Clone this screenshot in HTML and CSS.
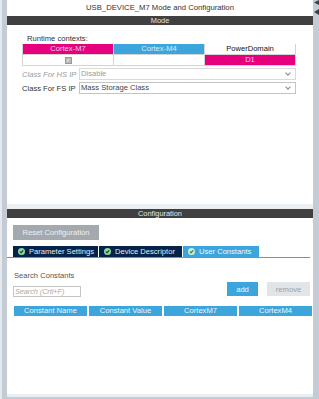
FILE: index.html
```html
<!DOCTYPE html>
<html lang="en">
<head>
    <meta charset="UTF-8">
    <meta name="viewport" content="width=device-width, initial-scale=1.0"/>
    <title>USB_DEVICE_M7 Mode and Configuration</title>
    <link rel="stylesheet" href="styles.css">
</head>
<body>
    <div class="screen">
        <div class="edge-left"></div>
        <div class="main">
            <section class="panel mode-panel">
                <div class="title">USB_DEVICE_M7 Mode and Configuration</div>
                <div class="bar">Mode</div>
                <div class="mode-body">
                    <div class="runtime-label">Runtime contexts:</div>
                    <div class="ctx-table">
                        <div class="cell magenta">Cortex-M7</div>
                        <div class="cell blue">Cortex-M4</div>
                        <div class="cell plain">PowerDomain</div>
                        <div class="cell"><span class="checkbox">&#10003;</span></div>
                        <div class="cell"></div>
                        <div class="cell magenta">D1</div>
                    </div>
                    <div class="field disabled">
                        <label>Class For HS IP</label>
                        <div class="select">Disable<span class="chev"></span></div>
                    </div>
                    <div class="field">
                        <label>Class For FS IP</label>
                        <div class="select">Mass Storage Class<span class="chev"></span></div>
                    </div>
                </div>
            </section>
            <section class="panel config-panel">
                <div class="bar">Configuration</div>
                <button class="reset-btn">Reset Configuration</button>
                <div class="tabs">
                    <div class="tab"><span class="ok"><svg viewBox="0 0 8 8" width="7" height="7"><circle cx="4" cy="4" r="4" fill="#8fd6a0"/><path d="M2.1 4.1 L3.5 5.4 L6 2.7" fill="none" stroke="#0d3a22" stroke-width="1.2"/></svg></span>Parameter Settings</div>
                    <div class="tab"><span class="ok"><svg viewBox="0 0 8 8" width="7" height="7"><circle cx="4" cy="4" r="4" fill="#8fd6a0"/><path d="M2.1 4.1 L3.5 5.4 L6 2.7" fill="none" stroke="#0d3a22" stroke-width="1.2"/></svg></span>Device Descriptor</div>
                    <div class="tab active"><span class="ok"><svg viewBox="0 0 8 8" width="7" height="7"><circle cx="4" cy="4" r="4" fill="#c8ecd0"/><path d="M2.1 4.1 L3.5 5.4 L6 2.7" fill="none" stroke="#2a7a48" stroke-width="1.2"/></svg></span>User Constants</div>
                </div>
                <div class="tab-area">
                    <div class="content">
                        <div class="search-label">Search Constants</div>
                        <div class="search-row">
                            <div class="search-input">Search (Crtl+F)</div>
                            <button class="btn add">add</button>
                            <button class="btn remove">remove</button>
                        </div>
                        <div class="const-head">
                            <div>Constant Name</div>
                            <div>Constant Value</div>
                            <div>CortexM7</div>
                            <div>CortexM4</div>
                        </div>
                    </div>
                    <div class="scroll"><div class="thumb"></div></div>
                </div>
            </section>
        </div>
        <div class="edge-right">
            <svg viewBox="0 0 6 16" width="6" height="16"><polygon points="6,0 1,2.5 6,5" fill="#3a3f44"/><polygon points="6,9 1,12 6,15" fill="#3a3f44"/></svg>
        </div>
    </div>
</body>
</html>
```

FILE: styles.css
```css
body { margin: 0; font-family: 'Liberation Sans', Arial, sans-serif; font-size: 7.6px; color: #333; background: #c3ccd4; }
.screen { display: flex; width: 319px; height: 399px; background: #c3ccd4; }
.edge-left { width: 5px; border-left: 2px solid #e6eaee; background: #c3ccd4; }
.main { width: 306px; display: flex; flex-direction: column; gap: 5px; padding-bottom: 5px; background: linear-gradient(#c3ccd4, #c3ccd4) bottom / 100% 2px no-repeat, #eceff2; }
.edge-right { width: 6px; background: #c3ccd4; }
.edge-right svg { display: block; }
.panel { background: #fff; display: flex; flex-direction: column; }
.mode-panel { height: 204px; flex: none; }
.config-panel { flex: 1; }
.title { height: 16px; line-height: 15px; text-align: center; font-size: 7.7px; color: #333; }
.bar { height: 9px; line-height: 9px; background: #404040; color: #e4e4e4; text-align: center; font-size: 7.4px; }
.mode-body { padding: 9px 17px 0 15px; }
.runtime-label { margin-left: 5px; height: 10px; line-height: 9px; }
.ctx-table { display: grid; grid-template-columns: repeat(3, 1fr); grid-auto-rows: 10px; gap: 1px; background: #d4d4d4; border: 1px solid #d4d4d4; border-top: 0; }
.cell { background: #fff; text-align: center; line-height: 10px; color: #222; }
.cell.magenta { background: #e6007e; color: #f6d0e6; }
.cell.blue { background: #3ba5dc; color: #d8eef9; }
.cell.plain { color: #111; }
.checkbox { display: inline-block; width: 5px; height: 5px; margin-top: 2px; background: #bbb; border: 1px solid #999; color: #fff; font-size: 5px; line-height: 5px; vertical-align: top; }
.field { display: flex; align-items: center; height: 12px; margin-top: 2px; }
.field:first-of-type { margin-top: 8px; }
.field label { width: 57px; flex: none; white-space: nowrap; }
.field .select { flex: 1; height: 10px; line-height: 10px; border: 1px solid #c4c4c4; padding-left: 1px; position: relative; color: #444; }
.field.disabled label { color: #9a9a9a; font-style: italic; }
.field.disabled .select { color: #9a9a9a; border-color: #dadada; }
.chev { position: absolute; right: 5px; top: 2px; width: 3px; height: 3px; border-right: 1px solid #888; border-bottom: 1px solid #888; transform: rotate(45deg); }
.reset-btn { display: block; margin: 7px 0 0 6px; width: 86px; height: 15px; padding: 0; border: 0; background: #a4a9ae; color: #eef0f2; font-family: inherit; font-size: 7.6px; }
.tabs { display: flex; gap: 1px; margin-top: 6px; padding-left: 6px; border-bottom: 1px solid #3ba5dc; margin-right: 3px; }
.tab { height: 11px; line-height: 11px; background: #03234b; color: #e8ecf2; padding-left: 5px; display: flex; align-items: center; gap: 4px; }
.tab:nth-child(1) { width: 80px; }
.tab:nth-child(2) { width: 78px; }
.tab.active { width: 71px; background: #3ba5dc; color: #f2f9fd; }
.ok svg { display: block; }
.tab-area { flex: 1; display: flex; }
.content { flex: 1; padding: 13px 0 0 6px; }
.scroll { width: 4px; margin: 1px 2px 0 0; background: #d5e6f4; }
.thumb { height: 61px; background: #3ba5dc; }
.search-label { margin-left: 1px; height: 10px; line-height: 9px; color: #555; }
.search-row { display: flex; align-items: flex-start; margin-top: 1px; padding-right: 2px; }
.search-input { margin-top: 4px; width: 65px; height: 9px; line-height: 9px; border: 1px solid #c4c4c4; padding-left: 1px; color: #a8a8a8; font-style: italic; font-size: 7.2px; }
.btn { height: 14px; padding: 0; border: 0; font-family: inherit; font-size: 7.6px; }
.btn.add { margin-left: auto; width: 31px; background: #3ba5dc; color: #f0f8fd; }
.btn.remove { margin-left: 9px; width: 43px; background: #e2e5e8; color: #9aa0a6; }
.const-head { display: grid; grid-template-columns: repeat(4, 73px); gap: 2px; margin: 9px 0 0 1px; }
.const-head div { height: 10px; line-height: 10px; background: #3ba5dc; color: #eef7fc; text-align: center; }
```
